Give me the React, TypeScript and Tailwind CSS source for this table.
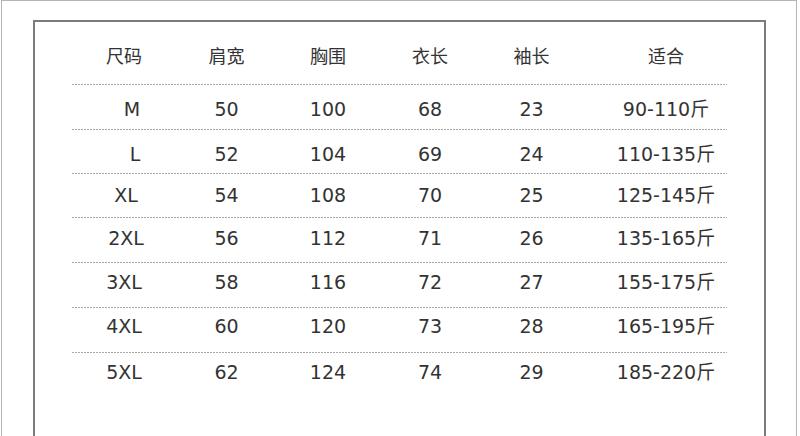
import React from 'react';

const headers = ['尺码', '肩宽', '胸围', '衣长', '袖长', '适合'];

const rows = [
  { size: 'M', sizeCls: 'pl-[16px]', vals: ['50', '100', '68', '23', '90-110斤'], h: 'h-[44px]', off: 'pt-[4px]' },
  { size: 'L', sizeCls: 'pl-[22px]', vals: ['52', '104', '69', '24', '110-135斤'], h: 'h-[43px]', off: 'pt-[5px]' },
  { size: 'XL', sizeCls: 'pl-[4px]', vals: ['54', '108', '70', '25', '125-145斤'], h: 'h-[43px]', off: 'pt-0' },
  { size: '2XL', sizeCls: 'pl-[4px]', vals: ['56', '112', '71', '26', '135-165斤'], h: 'h-[44px]', off: 'pb-[4px]' },
  { size: '3XL', sizeCls: 'pl-0', vals: ['58', '116', '72', '27', '155-175斤'], h: 'h-[44px]', off: 'pb-[6px]' },
  { size: '4XL', sizeCls: 'pl-0', vals: ['60', '120', '73', '28', '165-195斤'], h: 'h-[44px]', off: 'pb-[8px]' },
  { size: '5XL', sizeCls: 'pl-0', vals: ['62', '124', '74', '29', '185-220斤'], h: 'h-[44px]', off: 'pb-[6px]' },
];

const cols = 'grid grid-cols-[104px_101px_102px_102px_101px_1fr]';

const Dash = () => (
  <div className="h-px w-full bg-[image:repeating-linear-gradient(90deg,#a8a8a8_0px,#a8a8a8_2px,transparent_2px,transparent_3px)]" />
);

export default function App() {
  return (
    <div className="w-[800px] h-[436px] overflow-hidden bg-white">
      <div className="ml-[1px] w-[796px] h-[520px] border-t border-x border-[#b4b4b4]">
        <div className="mt-[19px] ml-[31px] w-[733px] h-[500px] border-2 border-[#7c7c7c]">
          <div className="ml-[37px] w-[655px] text-[#333] font-['DejaVu_Sans','Noto_Sans_CJK_SC',sans-serif]">
            <div className={`${cols} h-[62px] items-center pt-[4px] text-[18px] font-['Noto_Sans_CJK_SC',sans-serif]`}>
              {headers.map((h, i) => (
                <div key={h} className={i === 5 ? 'text-center pl-[23px]' : 'text-center'}>
                  {h}
                </div>
              ))}
            </div>
            {rows.map(r => (
              <div key={r.size}>
                <Dash />
                <div className={`${cols} ${r.h} ${r.off} items-center text-[19px]`}>
                  <div className={`text-center ${r.sizeCls}`}>{r.size}</div>
                  {r.vals.map((v, i) => (
                    <div key={i} className={i === 4 ? 'text-center pl-[23px]' : 'text-center'}>
                      {v}
                    </div>
                  ))}
                </div>
              </div>
            ))}
          </div>
        </div>
      </div>
    </div>
  );
}
